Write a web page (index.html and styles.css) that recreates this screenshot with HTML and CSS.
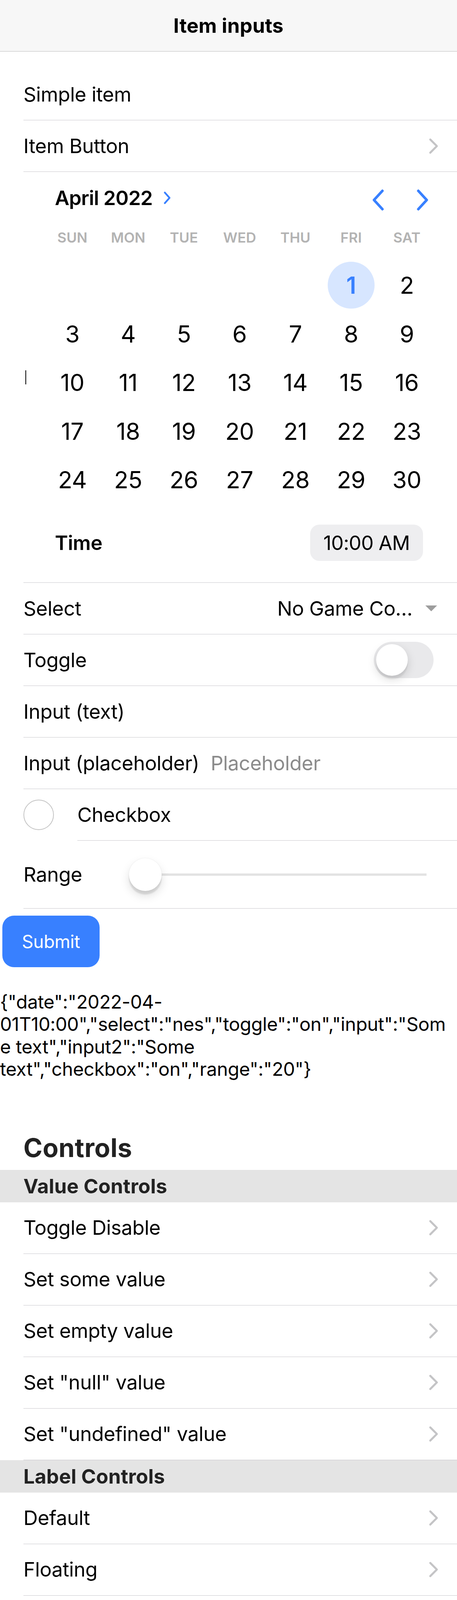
FILE: index.html
```html
<!DOCTYPE html>
<html lang="en">
<head>
<meta charset="utf-8">
<title>Item inputs</title>
<link rel="stylesheet" href="styles.css">
</head>
<body>
<header class="toolbar"><div class="toolbar-title">Item inputs</div></header>
<main class="content">
  <div class="list list-first">
    <div class="item"><div class="inner"><span class="label">Simple item</span></div></div>
    <div class="item"><div class="inner"><span class="label">Item Button</span>
      <svg class="detail" viewBox="0 0 512 512"><path d="M184 112l144 144-144 144"/></svg></div></div>

    <div class="item">
      <span class="caret"></span>
      <div class="inner">
        <div class="datetime dt-wide">
          <div class="dt-header">
            <div class="dt-month">April 2022<svg class="dt-month-chev" viewBox="0 0 6 11"><path d="M1 1l4 4.5L1 10"/></svg></div>
            <div class="dt-nav">
              <svg class="dt-arrow" viewBox="0 0 10 18"><path d="M8.7 1.2L1.5 9l7.2 7.8"/></svg>
              <svg class="dt-arrow" viewBox="0 0 10 18"><path d="M1.3 1.2L8.5 9l-7.2 7.8"/></svg>
            </div>
          </div>
          <div class="dt-weekdays"><span>SUN</span><span>MON</span><span>TUE</span><span>WED</span><span>THU</span><span>FRI</span><span>SAT</span></div>
          <div class="dt-days">
            <span></span><span></span><span></span><span></span><span></span>
            <span class="day day-active"><b>1</b></span><span class="day">2</span>
            <span class="day">3</span><span class="day">4</span><span class="day">5</span><span class="day">6</span><span class="day">7</span><span class="day">8</span><span class="day">9</span>
            <span class="day">10</span><span class="day">11</span><span class="day">12</span><span class="day">13</span><span class="day">14</span><span class="day">15</span><span class="day">16</span>
            <span class="day">17</span><span class="day">18</span><span class="day">19</span><span class="day">20</span><span class="day">21</span><span class="day">22</span><span class="day">23</span>
            <span class="day">24</span><span class="day">25</span><span class="day">26</span><span class="day">27</span><span class="day">28</span><span class="day">29</span><span class="day">30</span>
          </div>
          <div class="dt-time"><span class="dt-time-label">Time</span><span class="dt-time-btn">10:00 AM</span></div>
        </div>
      </div>
    </div>

    <div class="item"><div class="inner"><span class="label">Select</span><span class="select-text">No Game Co…</span><span class="select-icon"></span></div></div>
    <div class="item"><div class="inner"><span class="label">Toggle</span><span class="toggle toggle-end"></span></div></div>
    <div class="item"><div class="inner"><span class="label">Input (text)</span></div></div>
    <div class="item"><div class="inner"><span class="label">Input (placeholder)</span><span class="placeholder ph-single">Placeholder</span></div></div>
    <div class="item"><span class="check check-start"></span><div class="inner"><span class="label">Checkbox</span></div></div>
    <div class="item"><div class="inner inner-tall"><span class="label label-range">Range</span>
      <div class="range"><div class="track"><div class="fill" style="width:0%"></div><span class="knob" style="left:0%"></span></div></div>
    </div></div>
  </div>

  <div class="submit-wrap"><button class="btn-submit" type="button">Submit</button></div>

  <p class="json">{"date":"2022-04-<br>01T10:00","select":"nes","toggle":"on","input":"Som<br>e text","input2":"Some<br>text","checkbox":"on","range":"20"}</p>

  <div class="list-header"><h2>Controls</h2></div>
  <div class="list">
    <div class="divider">Value Controls</div>
    <div class="item"><div class="inner"><span class="label">Toggle Disable</span><svg class="detail" viewBox="0 0 512 512"><path d="M184 112l144 144-144 144"/></svg></div></div>
    <div class="item"><div class="inner"><span class="label">Set some value</span><svg class="detail" viewBox="0 0 512 512"><path d="M184 112l144 144-144 144"/></svg></div></div>
    <div class="item"><div class="inner"><span class="label">Set empty value</span><svg class="detail" viewBox="0 0 512 512"><path d="M184 112l144 144-144 144"/></svg></div></div>
    <div class="item"><div class="inner"><span class="label">Set "null" value</span><svg class="detail" viewBox="0 0 512 512"><path d="M184 112l144 144-144 144"/></svg></div></div>
    <div class="item"><div class="inner"><span class="label">Set "undefined" value</span><svg class="detail" viewBox="0 0 512 512"><path d="M184 112l144 144-144 144"/></svg></div></div>
    <div class="divider">Label Controls</div>
    <div class="item"><div class="inner"><span class="label">Default</span><svg class="detail" viewBox="0 0 512 512"><path d="M184 112l144 144-144 144"/></svg></div></div>
    <div class="item"><div class="inner"><span class="label">Floating</span><svg class="detail" viewBox="0 0 512 512"><path d="M184 112l144 144-144 144"/></svg></div></div>
    <div class="item"><div class="inner"><span class="label">Stacked</span><svg class="detail" viewBox="0 0 512 512"><path d="M184 112l144 144-144 144"/></svg></div></div>
    <div class="item"><div class="inner"><span class="label">Fixed</span><svg class="detail" viewBox="0 0 512 512"><path d="M184 112l144 144-144 144"/></svg></div></div>
  </div>

  <div class="list-header"><h2>Multiple inputs/clickables</h2></div>
  <div class="list">
    <div class="item"><div class="inner"><span class="label">Delayed input</span><span class="value">34</span><span class="stepper"><i class="tri-up"></i><i class="tri-down"></i></span></div></div>
    <div class="item"><div class="inner"><span class="label label-gap">Multiple inputs</span>
      <span class="cols"><span class="placeholder">Input 1</span><span class="placeholder">Input 2</span><span class="placeholder">Input 3</span></span></div></div>
    <div class="item"><div class="inner inner-top"><span class="label label-gap">Multiple textareas</span>
      <span class="cols"><span class="placeholder">Textare<br>a 1</span><span class="placeholder">Textare<br>a 2</span><span class="placeholder">Textare<br>a 3</span></span></div></div>
    <div class="item"><div class="inner inner-top"><span class="label label-gap">Multiple input/textareas</span>
      <span class="cols"><span class="placeholder">Texta<br>rea 1</span><span class="placeholder ph-mid">Input</span><span class="placeholder">Texta<br>rea 3</span></span></div></div>

    <div class="item">
      <span class="check check-start"></span>
      <div class="inner">
        <div class="datetime dt-narrow">
          <div class="dt-header">
            <div class="dt-month">April 2022<svg class="dt-month-chev" viewBox="0 0 6 11"><path d="M1 1l4 4.5L1 10"/></svg></div>
            <div class="dt-nav">
              <svg class="dt-arrow" viewBox="0 0 10 18"><path d="M8.7 1.2L1.5 9l7.2 7.8"/></svg>
              <svg class="dt-arrow" viewBox="0 0 10 18"><path d="M1.3 1.2L8.5 9l-7.2 7.8"/></svg>
            </div>
          </div>
          <div class="dt-weekdays"><span>SUN</span><span>MON</span><span>TUE</span><span>WED</span><span>THU</span><span>FRI</span><span>SAT</span></div>
          <div class="dt-days">
            <span></span><span></span><span></span><span></span><span></span>
            <span class="day day-active"><b>1</b></span><span class="day">2</span>
            <span class="day">3</span><span class="day">4</span><span class="day">5</span><span class="day">6</span><span class="day">7</span><span class="day">8</span><span class="day">9</span>
            <span class="day">10</span><span class="day">11</span><span class="day">12</span><span class="day">13</span><span class="day">14</span><span class="day">15</span><span class="day">16</span>
            <span class="day">17</span><span class="day">18</span><span class="day">19</span><span class="day">20</span><span class="day">21</span><span class="day">22</span><span class="day">23</span>
            <span class="day">24</span><span class="day">25</span><span class="day">26</span><span class="day">27</span><span class="day">28</span><span class="day">29</span><span class="day">30</span>
          </div>
          <div class="dt-time"><span class="dt-time-label">Time</span><span class="dt-time-btn">10:00 AM</span></div>
        </div>
        <span class="check check-end"></span>
      </div>
    </div>

    <div class="item">
      <span class="slot-select"><span class="muted">month</span><span class="select-icon select-icon-start"></span></span>
      <div class="inner"><span class="label">Input w/ clickable</span><button class="btn-small" type="button">Button</button></div>
    </div>
    <div class="item item-indent">
      <div class="inner inner-tall"><span class="label label-short">Input …</span>
        <div class="range"><div class="track"><div class="fill" style="width:45%"></div><span class="knob" style="left:45%"></span></div></div>
      </div>
    </div>
    <div class="item">
      <div class="inner inner-tall">
        <div class="range range-start"><div class="track"><div class="fill" style="width:60%"></div><span class="knob" style="left:60%"></span></div></div>
        <span class="label label-multi">Multi…</span>
        <span class="toggle"></span><span class="toggle"></span>
      </div>
    </div>
    <div class="item"><div class="inner"><span class="label">Clickable item</span><span class="check check-click"></span><svg class="detail detail-after" viewBox="0 0 512 512"><path d="M184 112l144 144-144 144"/></svg></div></div>
    <div class="item"><span class="check check-start"></span><div class="inner"><span class="label">Checkbox w/ disabled button</span><button class="btn-small btn-disabled" type="button">Button</button></div></div>
  </div>
</main>
</body>
</html>
```

FILE: styles.css
```css
html {
  margin: 0;
  background: #fff;
}

body {
  margin: 0;
  background: #fff;
  color: #000;
  font-family: Inter, "Noto Sans", "Liberation Sans", sans-serif;
  font-size: 51px;
  letter-spacing: -0.4px;
}

.toolbar {
  height: 132px;
  box-sizing: border-box;
  background: #f7f7f7;
  border-bottom: 1px solid #bdbdbd;
  display: flex;
  align-items: center;
  justify-content: center;
}

.toolbar-title {
  font-size: 51px;
  font-weight: 700;
  letter-spacing: 0.3px;
}

.content {
  padding-top: 44px;
  padding-bottom: 40px;
}

.item {
  position: relative;
  display: flex;
  align-items: center;
  padding-left: 60px;
  background: #fff;
}

.inner {
  flex: 1;
  min-width: 0;
  min-height: 132px;
  box-sizing: border-box;
  display: flex;
  align-items: center;
  padding-right: 30px;
  border-bottom: 1px solid #c8c7cc;
}

.inner-tall {
  min-height: 174px;
}

.inner-top {
  align-items: flex-start;
  padding-top: 33px;
  padding-bottom: 27px;
  min-height: 181.5px;
}

.label {
  font-size: 51px;
  line-height: 60px;
  white-space: nowrap;
}

.label-gap {
  margin-right: 28.5px;
}

.detail {
  width: 60px;
  height: 60px;
  margin-left: auto;
  flex: none;
  fill: none;
  stroke: #c4c4c6;
  stroke-width: 44;
  stroke-linecap: round;
  stroke-linejoin: round;
}

.detail-after {
  margin-left: 0;
}

.caret {
  position: absolute;
  left: 65px;
  top: 508px;
  width: 1.5px;
  height: 36px;
  background: #000;
}

/* datetime */
.datetime {
  flex: none;
}

.dt-wide {
  width: 999px;
  margin-left: 54px;
}

.dt-narrow {
  width: 730px;
  margin-left: 48px;
  margin-right: 55.5px;
}

.dt-header {
  height: 132px;
  display: flex;
  align-items: center;
  justify-content: space-between;
  padding: 0 16.5px 0 26.4px;
}

.dt-month {
  display: flex;
  align-items: center;
  font-size: 51px;
  font-weight: 600;
  letter-spacing: -0.8px;
}

.dt-month-chev {
  width: 18px;
  height: 33px;
  margin-left: 28.5px;
  fill: none;
  stroke: #3880ff;
  stroke-width: 1.5;
  stroke-linecap: round;
  stroke-linejoin: round;
}

.dt-nav {
  display: flex;
  gap: 84px;
  margin-top: 12px;
}

.dt-arrow {
  width: 30px;
  height: 54px;
  fill: none;
  stroke: #3880ff;
  stroke-width: 2.2;
  stroke-linecap: round;
  stroke-linejoin: round;
}

.dt-weekdays {
  display: grid;
  grid-template-columns: repeat(7, 1fr);
  line-height: 72px;
  font-size: 36px;
  font-weight: 600;
  letter-spacing: 0;
  color: #b3b3b3;
  text-align: center;
}

.dt-days {
  display: grid;
  grid-template-columns: repeat(7, 1fr);
  grid-auto-rows: 124.5px;
  margin-top: 24px;
}

.day {
  display: flex;
  align-items: center;
  justify-content: center;
  font-size: 60px;
}

.day-active b {
  flex: none;
  width: 120px;
  height: 120px;
  border-radius: 50%;
  background: #d7e6ff;
  color: #3880ff;
  font-weight: 600;
  display: flex;
  align-items: center;
  justify-content: center;
}

.dt-time {
  display: flex;
  align-items: center;
  justify-content: space-between;
  padding: 52.5px 30px 55px 26.4px;
}

.dt-time-label {
  font-size: 51px;
  font-weight: 600;
}

.dt-time-btn {
  height: 93px;
  box-sizing: border-box;
  display: flex;
  align-items: center;
  padding: 0 34px;
  border-radius: 24px;
  background: #eeeef0;
  font-size: 51px;
  letter-spacing: -0.8px;
}

/* select */
.select-text {
  margin-left: auto;
  font-size: 51px;
  white-space: nowrap;
}

.select-icon {
  flex: none;
  width: 0;
  height: 0;
  border-left: 15px solid transparent;
  border-right: 15px solid transparent;
  border-top: 15px solid #9d9d9d;
  margin-left: 33px;
  margin-right: 21px;
}

.slot-select {
  flex: none;
  width: 341px;
  box-sizing: border-box;
  padding-left: 61.5px;
  display: flex;
  align-items: center;
}

.muted {
  font-size: 51px;
  color: #ababab;
}

.select-icon-start {
  margin-left: 19.5px;
  margin-right: 0;
  border-left-width: 14px;
  border-right-width: 14px;
  border-top-color: #a0a0a0;
}

/* toggle */
.toggle {
  position: relative;
  flex: none;
  width: 153px;
  height: 93px;
  border-radius: 48px;
  background: #e9e9eb;
}

.toggle::after {
  content: "";
  position: absolute;
  left: 6px;
  top: 6px;
  width: 81px;
  height: 81px;
  border-radius: 50%;
  background: #fff;
  box-shadow: 0 9px 24px rgba(0, 0, 0, 0.15), 0 9px 3px rgba(0, 0, 0, 0.06);
}

.toggle-end {
  margin-left: auto;
  margin-right: 30px;
}

/* placeholders */
.placeholder {
  font-size: 51px;
  line-height: 60px;
  color: #8b8b8b;
  white-space: nowrap;
}

.ph-single {
  margin-left: 29px;
}

.cols {
  flex: 1;
  display: flex;
}

.cols .placeholder {
  flex: 1;
  min-width: 0;
}

.ph-mid {
  align-self: center;
}

/* checkbox */
.check {
  flex: none;
  width: 78px;
  height: 78px;
  box-sizing: border-box;
  border: 2px solid #c4c4c4;
  border-radius: 50%;
}

.check-start {
  margin-right: 60px;
}

.check-end {
  margin-right: 30px;
}

.check-click {
  margin-left: auto;
  margin-right: 29px;
}

/* range */
.label-range {
  width: 264px;
}

.range {
  flex: 1;
  padding: 0 48px;
}

.range-start {
  flex: none;
  width: 587px;
  box-sizing: border-box;
}

.track {
  position: relative;
  height: 6px;
  background: #e3e3e3;
}

.fill {
  height: 6px;
  background: #3880ff;
}

.knob {
  position: absolute;
  top: -39px;
  width: 84px;
  height: 84px;
  margin-left: -42px;
  border-radius: 50%;
  background: #fff;
  box-shadow: 0 9px 3px rgba(0, 0, 0, 0.1), 0 12px 24px rgba(0, 0, 0, 0.13), 0 0 0 1px rgba(0, 0, 0, 0.04);
}

.item-indent {
  padding-left: 165.6px;
}

.label-short {
  width: 238px;
}

.label-multi {
  flex: 1;
  margin-left: 2px;
}

/* buttons */
.submit-wrap {
  padding: 18px 0 0 6px;
}

.btn-submit {
  height: 132px;
  padding: 0 50px;
  border: 0;
  border-radius: 30px;
  background: #3880ff;
  color: #fff;
  font-family: inherit;
  font-size: 46px;
  letter-spacing: -0.4px;
}

.btn-small {
  flex: none;
  margin-left: auto;
  margin-right: 30px;
  width: 162px;
  height: 72px;
  padding: 0;
  border: 0;
  border-radius: 18px;
  background: #3880ff;
  color: #fff;
  font-family: inherit;
  font-size: 39px;
}

.btn-disabled {
  opacity: 0.5;
}

/* delayed input */
.value {
  flex: 1;
  margin-left: 26.7px;
  font-size: 51px;
}

.stepper {
  flex: none;
  width: 48px;
  height: 48px;
  box-sizing: border-box;
  margin-right: 30px;
  border: 2px solid #e8e8e8;
  border-radius: 4px;
  display: flex;
  flex-direction: column;
  align-items: center;
  justify-content: center;
  gap: 15px;
}

.tri-up,
.tri-down {
  width: 0;
  height: 0;
  border-left: 13px solid transparent;
  border-right: 13px solid transparent;
}

.tri-up {
  border-bottom: 7px solid #333;
}

.tri-down {
  border-top: 7px solid #333;
}

/* text blocks */
.json {
  margin: 60px 0 46.5px;
  font-size: 48px;
  line-height: 57.3px;
  letter-spacing: -0.45px;
  white-space: nowrap;
}

.list-header {
  height: 183px;
  display: flex;
  align-items: flex-end;
  padding-left: 60px;
}

.list-header h2 {
  margin: 0 0 15px;
  font-size: 66px;
  line-height: 84px;
  font-weight: 700;
  letter-spacing: 0.4px;
  color: #222;
}

.divider {
  min-height: 83px;
  display: flex;
  align-items: center;
  padding-left: 60px;
  background: #e4e4e4;
  color: #222;
  font-size: 51px;
  font-weight: 700;
  letter-spacing: 0.2px;
}
```
